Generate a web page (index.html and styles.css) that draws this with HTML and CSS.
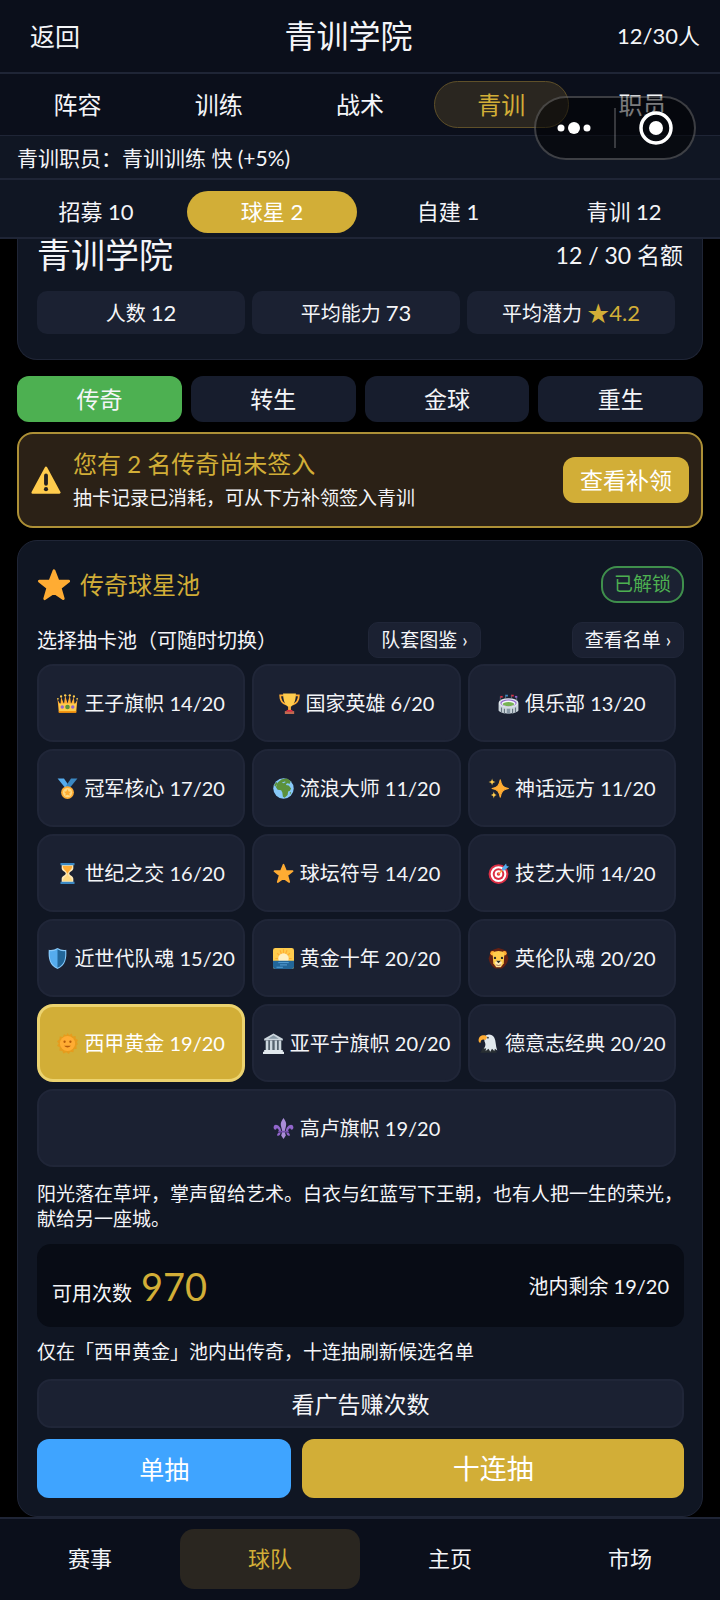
FILE: index.html
```html
<!DOCTYPE html>
<html lang="zh-CN">
<head>
<meta charset="utf-8">
<meta name="viewport" content="width=device-width, initial-scale=1">
<title>青训学院</title>
<link rel="stylesheet" href="styles.css">
</head>
<body>
<svg class="defs" aria-hidden="true">
  <symbol id="star" viewBox="0 0 36 36"><path d="M18 3l4.300 11H33.500l-9 7 3.300 11.500L18 25.800l-9.800 6.700L11.500 21l-9-7H13.700z" fill="#ffac33" stroke="#ffac33" stroke-width="3" stroke-linejoin="round"/></symbol>
</svg>
<div class="app">
  <header class="topbar">
    <button class="back">返回</button>
    <h1 class="topbar-title">青训学院</h1>
    <span class="topbar-count">12/30人</span>
  </header>
  <nav class="tabs">
    <button class="tab">阵容</button>
    <button class="tab">训练</button>
    <button class="tab">战术</button>
    <button class="tab tab-active">青训</button>
    <button class="tab">职员</button>
  </nav>
  <div class="capsule">
    <button class="capsule-btn" aria-label="更多"><svg width="40" height="40" viewBox="0 0 40 40" fill="#fff"><circle cx="6" cy="20" r="3.500"/><circle cx="19" cy="20" r="6"/><circle cx="32" cy="20" r="3.500"/></svg></button>
    <button class="capsule-btn" aria-label="关闭"><svg width="40" height="40" viewBox="0 0 40 40"><circle cx="21" cy="20" r="15" fill="none" stroke="#fff" stroke-width="3.500"/><circle cx="21" cy="20" r="7" fill="#fff"/></svg></button>
  </div>
  <p class="staff">青训职员：青训训练 快 (+5%)</p>
  <nav class="subtabs">
    <button class="subtab">招募 10</button>
    <button class="subtab subtab-active">球星 2</button>
    <button class="subtab">自建 1</button>
    <button class="subtab">青训 12</button>
  </nav>

  <main class="content">
    <section class="card summary">
      <div class="summary-head">
        <h2 class="summary-title">青训学院</h2>
        <span class="summary-quota">12 / 30 名额</span>
      </div>
      <div class="stats">
        <div class="stat">人数 <b>12</b></div>
        <div class="stat">平均能力 <b>73</b></div>
        <div class="stat">平均潜力 <b class="gold">★4.2</b></div>
      </div>
    </section>

    <div class="segments">
      <button class="segment segment-active">传奇</button>
      <button class="segment">转生</button>
      <button class="segment">金球</button>
      <button class="segment">重生</button>
    </div>

    <section class="alert">
      <svg class="alert-icon" viewBox="0 0 36 36"><path d="M18 3.500L34 33H2z" fill="#ffcc4d" stroke="#ffcc4d" stroke-width="3" stroke-linejoin="round"/><path d="M18 12.500v10" stroke="#231f20" stroke-width="4.600" stroke-linecap="round"/><circle cx="18" cy="29" r="2.500" fill="#231f20"/></svg>
      <div class="alert-body">
        <h3 class="alert-title">您有 2 名传奇尚未签入</h3>
        <p class="alert-text">抽卡记录已消耗，可从下方补领签入青训</p>
      </div>
      <button class="alert-btn">查看补领</button>
    </section>

    <section class="card pool">
      <div class="pool-head">
        <svg class="pool-star"><use href="#star"/></svg>
        <h2 class="pool-title">传奇球星池</h2>
        <span class="badge">已解锁</span>
      </div>
      <div class="pool-pick">
        <span>选择抽卡池（可随时切换）</span>
        <button class="link-btn">队套图鉴 ›</button>
        <button class="link-btn">查看名单 ›</button>
      </div>
      <div class="pools">
        <button class="chip"><svg class="emoji" viewBox="0 0 36 36"><path d="M3 33L1 11l5 9 1-13 5 12 2-15 4 14 4-14 2 15 5-12 1 13 5-9-2 22z" fill="#ffac33"/><path d="M3 18h30l-1 15H4z" fill="#ffcc4d"/><path d="M3 31h30v3H3z" fill="#f4900c"/><circle cx="18" cy="24" r="4" fill="#5c913b"/><circle cx="9" cy="24" r="3" fill="#9266cc"/><circle cx="27" cy="24" r="3" fill="#9266cc"/><g fill="#ffcc4d"><circle cx="1.500" cy="10" r="1.500"/><circle cx="7" cy="6" r="2"/><circle cx="14" cy="4" r="2"/><circle cx="22" cy="4" r="2"/><circle cx="29" cy="6" r="2"/><circle cx="34.500" cy="10" r="1.500"/></g></svg>王子旗帜 14/20</button>
        <button class="chip"><svg class="emoji" viewBox="0 0 36 36"><path d="M8 4H2c0 9 3 14 11 16M28 4h6c0 9-3 14-11 16" fill="none" stroke="#ffac33" stroke-width="3"/><path d="M7 1h22c0 11-3 20-9 23v7h-4v-7C10 21 7 12 7 1z" fill="#ffcc4d"/><path d="M16 23h4v7h-4z" fill="#ffac33"/><path d="M10 31h16v5H10z" fill="#c1694f"/><path d="M13 29h10v3H13z" fill="#dd2e44"/></svg>国家英雄 6/20</button>
        <button class="chip"><svg class="emoji" viewBox="0 0 36 36"><path d="M1 18h34v12c-4 7-30 7-34 0z" fill="#ccd6dd"/><ellipse cx="18" cy="17" rx="17" ry="8" fill="#e1e8ed"/><ellipse cx="18" cy="17" rx="14" ry="6" fill="#9266cc"/><ellipse cx="18" cy="18" rx="12" ry="5" fill="#f5f8fa"/><ellipse cx="18" cy="19" rx="10" ry="3.500" fill="#77b255"/><path d="M6 25v8M11 27v8M25 27v8M30 25v8" stroke="#66757f" stroke-width="2"/><path d="M15 27h6v8h-6z" fill="#8899a6"/><path d="M4 14V6M13 10V3M23 10V3M32 14V6" stroke="#8899a6"/><path d="M4 5h4v3H4z" fill="#dd2e44"/><path d="M13 3h4v3h-4z" fill="#3b88c3"/><path d="M23 3h4v3h-4z" fill="#dd2e44"/><path d="M29 5h4v3h-4z" fill="#9266cc"/></svg>俱乐部 13/20</button>

        <button class="chip"><svg class="emoji" viewBox="0 0 36 36"><path d="M1 1h11l9 13-6 4z" fill="#55acee"/><path d="M24 1h11L21 18l-6-4z" fill="#3b88c3"/><circle cx="18" cy="25" r="11" fill="#ffac33"/><circle cx="18" cy="25" r="8" fill="#ffd983"/><path d="M18 19l2 4 4 .500-3 3 1 4-4-2-4 2 1-4-3-3 4-.500z" fill="#ffac33"/></svg>冠军核心 17/20</button>
        <button class="chip"><svg class="emoji" viewBox="0 0 36 36"><circle cx="18" cy="18" r="17.500" fill="#88c9f9"/><path d="M9 7l6-5 9-1 6 4-1 5-5-1-2 3 5 1 4 5-2 4-3 1-1 6-5 5-3-2-1-7-2-4-6-1-3-4 2-6z" fill="#5c913b"/><path d="M2 12l4-5 2 2-4 6zM29 24l2 1-2 4z" fill="#5c913b"/><path d="M15 8l5-2 2 1-4 2z" fill="#88c9f9"/></svg>流浪大师 11/20</button>
        <button class="chip"><svg class="emoji" viewBox="0 0 36 36"><path d="M21 3c2 10 4 13 14 15-10 2-12 5-14 15-2-10-4-13-14-15 10-2 12-5 14-15z" fill="#ffac33" stroke="#ffac33" stroke-width="2" stroke-linejoin="round"/><path d="M7 1c.800 4 1.500 5 6 6-4.500 1-5.200 2-6 6-.800-4-1.500-5-6-6 4.500-1 5.200-2 6-6zM10 23c.800 4 1.500 5 5 6-3.500 1-4.200 2-5 6-.800-4-1.500-5-5-6 3.500-1 4.200-2 5-6z" fill="#ffcc4d"/></svg>神话远方 11/20</button>

        <button class="chip"><svg class="emoji" viewBox="0 0 36 36"><path d="M8 3h20v6c0 5-7 6-7 9s7 4 7 9v6H8v-6c0-5 7-6 7-9S8 14 8 9z" fill="#ffe8b6"/><path d="M10 5h16c0 7-7 8-7 13h-2c0-5-7-6-7-13z" fill="#ffac33"/><path d="M17 18h2c0 6 6 5 7 13H10c1-8 7-7 7-13z" fill="#ffd983"/><path d="M6 0h24v4H6zM6 32h24v4H6z" fill="#3b88c3"/></svg>世纪之交 16/20</button>
        <button class="chip"><svg class="emoji"><use href="#star"/></svg>球坛符号 14/20</button>
        <button class="chip"><svg class="emoji" viewBox="0 0 36 36"><circle cx="18" cy="19" r="17" fill="#dd2e44"/><circle cx="18" cy="19" r="13.500" fill="#fff"/><circle cx="18" cy="19" r="10" fill="#dd2e44"/><circle cx="18" cy="19" r="6.500" fill="#fff"/><circle cx="18" cy="19" r="3" fill="#dd2e44"/><path d="M18 19L30 7" stroke="#ffac33" stroke-width="2"/><path d="M24 9l7-8 1 4 4 1-8 7h-4z" fill="#55acee"/></svg>技艺大师 14/20</button>

        <button class="chip"><svg class="emoji" viewBox="0 0 36 36"><path d="M18 0c5 3 10 4 15 3 1 15-1 27-15 33C4 30 2 18 3 3c5 1 10 0 15-3z" fill="#88c9f9"/><path d="M18 2c4 3 9 4 13 3 1 13-1 23-13 29C6 28 4 18 5 5c4 1 9 0 13-3z" fill="#55acee"/><path d="M18 2c4 3 9 4 13 3 1 13-1 23-13 29z" fill="#226699"/></svg>近世代队魂 15/20</button>
        <button class="chip"><svg class="emoji" viewBox="0 0 36 36"><rect width="36" height="36" rx="4" fill="#ffcc4d"/><path d="M18 2v20M4 18h28M7 9l22 18M29 9L7 27M12 4l12 30M24 4L12 34" stroke="#ffac33" stroke-width="2"/><circle cx="18" cy="18" r="9" fill="#fff0c4"/><path d="M0 22h36v10a4 4 0 0 1-4 4H4a4 4 0 0 1-4-4z" fill="#226699"/><path d="M9 25h18M12 29h12M6 33h11" stroke="#5da7dd" stroke-width="1.500"/></svg>黄金十年 20/20</button>
        <button class="chip"><svg class="emoji" viewBox="0 0 36 36"><path d="M18 0l7 2 7 3 1 7 2 6-2 7-4 6-5 4H12l-5-4-4-6-2-7 2-6 1-7 7-3z" fill="#662113"/><circle cx="8" cy="9" r="4" fill="#ffac33"/><circle cx="28" cy="9" r="4" fill="#ffac33"/><path d="M8 9c5-5 15-5 20 0l-1 17-5 7h-8l-5-7z" fill="#ffcc4d"/><path d="M12 24l6-3 6 3-2 8h-8z" fill="#ffe8b6"/><circle cx="12" cy="17" r="2" fill="#272b2b"/><circle cx="24" cy="17" r="2" fill="#272b2b"/><path d="M14 22h8l-4 4z" fill="#272b2b"/><path d="M14 29q4 2 8 0" stroke="#662113" fill="none"/></svg>英伦队魂 20/20</button>

        <button class="chip chip-active"><svg class="emoji" viewBox="0 0 36 36"><path d="M18 0l3 4 4-3 2 5 5-1v5l4 2-2 4 2 3-3 3 1 5-5 1-1 5-5-1-3 4-4-3-5 2-2-4-5-1 1-5-5-3 3-4-3-4 4-3 1-5 5 1 2-5 4 2z" fill="#f4900c" opacity=".600"/><circle cx="18" cy="18" r="13" fill="#ffac33"/><circle cx="13" cy="15" r="2" fill="#b55c0a"/><circle cx="23" cy="15" r="2" fill="#b55c0a"/><path d="M12 22q6 6 12 0z" fill="#b55c0a"/></svg>西甲黄金 19/20</button>
        <button class="chip"><svg class="emoji" viewBox="0 0 36 36"><path d="M18 1l16 9v3H2v-3z" fill="#ccd6dd"/><path d="M18 4l9 6H9z" fill="#8899a6"/><path d="M4 13h28v17H4z" fill="#55626d"/><path d="M5 13h4v18H5zM12 13h4v18h-4zM20 13h4v18h-4zM27 13h4v18h-4z" fill="#ccd6dd"/><path d="M2 29h32v3h2v4H0v-4h2z" fill="#e1e8ed"/></svg>亚平宁旗帜 20/20</button>
        <button class="chip"><svg class="emoji" viewBox="0 0 36 36"><path d="M9 25l-5 9h28l-2-8z" fill="#292f33"/><path d="M11 7c3-6 13-6 17 1 3 6 2 14 5 22l-4-3-1 4-4-4-3 5-3-5-5 4 1-5-4 1c4-6 3-9 1-13z" fill="#e1e8ed"/><path d="M1 13c0-7 5-10 11-9l4 3-3 5c-5-2-8-1-9 5-2-1-3-2-3-4z" fill="#ffac33"/><circle cx="17" cy="8" r="1.500" fill="#292f33"/></svg>德意志经典 20/20</button>
        <button class="chip chip-wide"><svg class="emoji" viewBox="0 0 36 36"><path d="M18 0c3 5 6 8 4 15l-2 8 2 7-4 6-4-6 2-7-2-8c-2-7 1-10 4-15z" fill="#aa8dd8"/><path d="M14 23C14 13 2 7 1 16c0 4 3 5 5 3-1-3 5-1 4 5zM22 23c0-10 12-16 13-7 0 4-3 5-5 3 1-3-5-1-4 5z" fill="#9266cc"/><path d="M9 22h18v3H9z" fill="#744eaa"/><path d="M13 25c0 4-3 7-6 5 0-3 2-5 6-5zM23 25c0 4 3 7 6 5 0-3-2-5-6-5z" fill="#9266cc"/></svg>高卢旗帜 19/20</button>
      </div>
      <p class="pool-desc">阳光落在草坪，掌声留给艺术。白衣与红蓝写下王朝，也有人把一生的荣光，献给另一座城。</p>
      <div class="balance">
        <span class="balance-left">可用次数 <strong class="balance-num">970</strong></span>
        <span>池内剩余 19/20</span>
      </div>
      <p class="pool-note">仅在「西甲黄金」池内出传奇，十连抽刷新候选名单</p>
      <button class="ad-btn">看广告赚次数</button>
      <div class="draws">
        <button class="draw draw-one">单抽</button>
        <button class="draw draw-ten">十连抽</button>
      </div>
    </section>
  </main>

  <nav class="bottom">
    <button class="bottom-item">赛事</button>
    <button class="bottom-item bottom-active">球队</button>
    <button class="bottom-item">主页</button>
    <button class="bottom-item">市场</button>
  </nav>
</div>
</body>
</html>
```
FILE: styles.css
```css
:root {
  --gold: #d2ae37;
  --line: #1f2536;
  --bar: #0b0f1b;
  --panel: #101623;
  --chip: #1b2132;
}
* { box-sizing: border-box; margin: 0; padding: 0; }
body {
  background: #000;
  color: #f4f5f8;
  font-family: Lato, "Noto Sans CJK SC", sans-serif;
  font-size: 20px;
  line-height: 26px;
}
button {
  font: inherit;
  color: inherit;
  background: none;
  border: 0;
  white-space: nowrap;
  cursor: pointer;
}
h1, h2, h3, b, strong { font-weight: 400; }
.defs { display: none; }
.app { position: relative; display: flex; flex-direction: column; min-height: 100vh; }
.gold { color: var(--gold); }

.topbar {
  display: flex;
  justify-content: space-between;
  align-items: center;
  height: 74px;
  padding: 0 20px 0 30px;
  background: var(--bar);
  border-bottom: 2px solid var(--line);
}
.back { font-size: 25px; }
.topbar-title { font-size: 32px; line-height: 40px; }
.topbar-count { font-size: 22px; }

.tabs {
  display: flex;
  gap: 6px;
  padding: 7px 10px;
  background: var(--bar);
  border-bottom: 1px solid var(--line);
}
.tab { flex: 1; height: 47px; font-size: 24px; border: 1px solid transparent; border-radius: 24px; }
.tab-active { color: var(--gold); background: #2a2620; border-color: #5f5029; }

.capsule {
  position: absolute;
  top: 96px;
  right: 24px;
  display: flex;
  width: 162px;
  height: 64px;
  align-items: center;
  background: rgba(0, 0, 0, .5);
  border: 2px solid rgba(255, 255, 255, .22);
  border-radius: 32px;
}
.capsule-btn { flex: 1; height: 40px; }
.capsule-btn svg { display: block; margin: 0 auto; }
.capsule-btn + .capsule-btn { border-left: 2px solid rgba(255, 255, 255, .2); }

.staff { padding: 9px 17px 7px; font-size: 21px; background: var(--panel); border-bottom: 2px solid var(--line); }
.subtabs {
  display: flex;
  gap: 6px;
  padding: 11px 11px 4px;
  background: var(--panel);
  border-bottom: 2px solid var(--line);
}
.subtab { flex: 1; height: 42px; font-size: 22px; border-radius: 21px; }
.subtab-active { background: var(--gold); color: #fff; }

.content { flex: 1; padding: 0 17px; }
.card { padding: 25px 18px 18px 19px; background: var(--panel); border: 1px solid var(--line); border-radius: 20px; }
.summary { padding: 0 19px 25px; border-top: 0; border-radius: 0 0 20px 20px; }
.summary-head { display: flex; justify-content: space-between; align-items: center; height: 32px; margin-bottom: 20px; }
.summary-title { font-size: 34px; }
.summary-quota { font-size: 23px; }
.stats { display: grid; grid-template-columns: repeat(3, 1fr); gap: 7px; margin-right: 8px; }
.stat { height: 43px; line-height: 43px; text-align: center; background: var(--chip); border-radius: 10px; }
.stat b { font-size: 22px; }

.segments { display: flex; gap: 9px; margin: 16px 0 10px; }
.segment { flex: 1; height: 46px; font-size: 23px; background: #171d2d; border-radius: 12px; }
.segment-active { background: #4db051; }

.alert {
  display: flex;
  align-items: center;
  height: 96px;
  margin-bottom: 12px;
  padding: 0 12px;
  background: #2b2116;
  border: 2px solid #ad9036;
  border-radius: 16px;
}
.alert-icon { width: 30px; height: 30px; margin-right: 12px; }
.alert-body { flex: 1; }
.alert-title { font-size: 24px; line-height: 36px; color: var(--gold); }
.alert-text { font-size: 19px; line-height: 32px; }
.alert-btn { height: 46px; padding: 0 17px; font-size: 23px; color: #fff; background: var(--gold); border-radius: 12px; }

.pool-head { display: flex; align-items: center; height: 37px; margin-bottom: 19px; }
.pool-star { width: 34px; height: 34px; margin-right: 9px; }
.pool-title { flex: 1; font-size: 24px; color: var(--gold); }
.badge { padding: 4px 11px 5px; font-size: 19px; line-height: 24px; color: #4db051; background: var(--chip); border: 2px solid #3f8f4c; border-radius: 16px; }
.pool-pick { display: flex; justify-content: space-between; align-items: center; margin-bottom: 6px; }
.link-btn { height: 36px; padding: 0 12px; font-size: 19px; background: var(--chip); border: 1px solid #202638; border-radius: 10px; }

.pools { display: grid; grid-template-columns: repeat(3, 1fr); gap: 7px; margin-right: 8px; }
.chip {
  display: flex;
  align-items: center;
  justify-content: center;
  gap: 6px;
  height: 78px;
  background: var(--chip);
  border: 2px solid #202638;
  border-radius: 16px;
}
.chip-active { background: var(--gold); border: 3px solid #ecd36f; color: #fff; }
.chip-wide { grid-column: 1 / -1; }
.emoji { flex: none; width: 21px; height: 21px; }

.pool-desc { margin: 14px 0 13px; font-size: 19px; line-height: 25px; }
.balance {
  display: flex;
  justify-content: space-between;
  align-items: center;
  height: 83px;
  padding: 0 15px;
  background: #080c15;
  border-radius: 14px;
}
.balance-left { display: flex; align-items: baseline; gap: 9px; }
.balance-num { font-size: 38px; line-height: 52px; color: var(--gold); }
.pool-note { margin: 12px 0 14px; font-size: 19px; }
.ad-btn { display: block; width: 100%; height: 49px; margin-bottom: 11px; font-size: 23px; background: var(--chip); border: 2px solid #202638; border-radius: 14px; }
.draws { display: grid; grid-template-columns: 2fr 3fr; gap: 11px; }
.draw { height: 59px; color: #fff; border-radius: 12px; }
.draw-one { font-size: 25px; background: #3fa4ff; }
.draw-ten { font-size: 27px; background: var(--gold); }

.bottom { display: flex; padding: 10px 0 11px; background: var(--bar); border-top: 2px solid var(--line); }
.bottom-item { flex: 1; height: 60px; font-size: 22px; border-radius: 14px; }
.bottom-active { color: var(--gold); background: #2a2620; }
```
